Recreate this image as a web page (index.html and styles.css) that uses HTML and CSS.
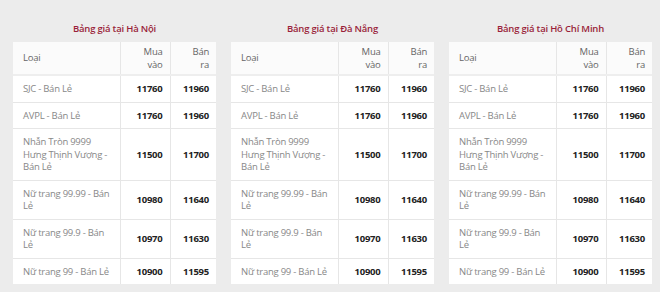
FILE: index.html
```html
<!DOCTYPE html>
<html lang="vi">
<head>
<meta charset="utf-8">
<link rel="stylesheet" href="styles.css">
</head>
<body>
<div class="wrap">
  <section class="panel">
    <h3 class="title">Bảng giá tại Hà Nội</h3>
    <table class="price">
      <thead><tr><th class="c-name">Loại</th><th class="c-buy">Mua vào</th><th class="c-sell">Bán ra</th></tr></thead>
      <tbody>
        <tr><td>SJC - Bán Lẻ</td><td class="num">11760</td><td class="num">11960</td></tr>
        <tr><td>AVPL - Bán Lẻ</td><td class="num">11760</td><td class="num">11960</td></tr>
        <tr><td>Nhẫn Tròn 9999 Hưng Thịnh Vượng - Bán Lẻ</td><td class="num">11500</td><td class="num">11700</td></tr>
        <tr><td>Nữ trang 99.99 - Bán Lẻ</td><td class="num">10980</td><td class="num">11640</td></tr>
        <tr><td>Nữ trang 99.9 - Bán Lẻ</td><td class="num">10970</td><td class="num">11630</td></tr>
        <tr><td>Nữ trang 99 - Bán Lẻ</td><td class="num">10900</td><td class="num">11595</td></tr>
      </tbody>
    </table>
  </section>
  <section class="panel">
    <h3 class="title">Bảng giá tại Đà Nẵng</h3>
    <table class="price">
      <thead><tr><th class="c-name">Loại</th><th class="c-buy">Mua vào</th><th class="c-sell">Bán ra</th></tr></thead>
      <tbody>
        <tr><td>SJC - Bán Lẻ</td><td class="num">11760</td><td class="num">11960</td></tr>
        <tr><td>AVPL - Bán Lẻ</td><td class="num">11760</td><td class="num">11960</td></tr>
        <tr><td>Nhẫn Tròn 9999 Hưng Thịnh Vượng - Bán Lẻ</td><td class="num">11500</td><td class="num">11700</td></tr>
        <tr><td>Nữ trang 99.99 - Bán Lẻ</td><td class="num">10980</td><td class="num">11640</td></tr>
        <tr><td>Nữ trang 99.9 - Bán Lẻ</td><td class="num">10970</td><td class="num">11630</td></tr>
        <tr><td>Nữ trang 99 - Bán Lẻ</td><td class="num">10900</td><td class="num">11595</td></tr>
      </tbody>
    </table>
  </section>
  <section class="panel">
    <h3 class="title">Bảng giá tại Hồ Chí Minh</h3>
    <table class="price">
      <thead><tr><th class="c-name">Loại</th><th class="c-buy">Mua vào</th><th class="c-sell">Bán ra</th></tr></thead>
      <tbody>
        <tr><td>SJC - Bán Lẻ</td><td class="num">11760</td><td class="num">11960</td></tr>
        <tr><td>AVPL - Bán Lẻ</td><td class="num">11760</td><td class="num">11960</td></tr>
        <tr><td>Nhẫn Tròn 9999 Hưng Thịnh Vượng - Bán Lẻ</td><td class="num">11500</td><td class="num">11700</td></tr>
        <tr><td>Nữ trang 99.99 - Bán Lẻ</td><td class="num">10980</td><td class="num">11640</td></tr>
        <tr><td>Nữ trang 99.9 - Bán Lẻ</td><td class="num">10970</td><td class="num">11630</td></tr>
        <tr><td>Nữ trang 99 - Bán Lẻ</td><td class="num">10900</td><td class="num">11595</td></tr>
      </tbody>
    </table>
  </section>
</div>
</body>
</html>
```
FILE: styles.css
```css
html, body {
  margin: 0;
  padding: 0;
  background: #ececec;
  font-family: "Open Sans", "Noto Sans", sans-serif;
}
.wrap {
  display: flex;
  gap: 15px;
  padding: 21px 8px 0 13px;
}
.panel {
  width: 203px;
  flex: none;
}
.title {
  margin: 0 0 6px;
  text-align: center;
  font-size: 9.5px;
  font-weight: 600;
  letter-spacing: -0.2px;
  line-height: 15px;
  color: #9a1f3a;
}
.price {
  width: 203px;
  border-collapse: collapse;
  background: #fff;
  font-size: 9.5px;
  letter-spacing: -0.25px;
  line-height: 12.5px;
  table-layout: fixed;
}
.price th {
  box-sizing: border-box;
  background: #fbfbfb;
  color: #666;
  font-weight: 400;
  padding: 4px 7px 3px 10px;
  border-bottom: 2px solid #eeeeee;
}
.price th.c-name { text-align: left; width: 107px; }
.price th.c-buy { text-align: right; width: 50px; }
.price th.c-sell { text-align: right; width: 46px; padding-left: 18px; }
.price th + th, .price td + td { border-left: 1px solid #e6e6e6; }
.price td {
  color: #888;
  padding: 7px 4px 6px 10px;
  border-bottom: 1px solid #e6e6e6;
  vertical-align: middle;
}
.price tr:last-child td { border-bottom: none; }
.price td.num {
  text-align: right;
  color: #222;
  font-weight: 700;
  padding-left: 2px;
  padding-right: 7px;
}
```
